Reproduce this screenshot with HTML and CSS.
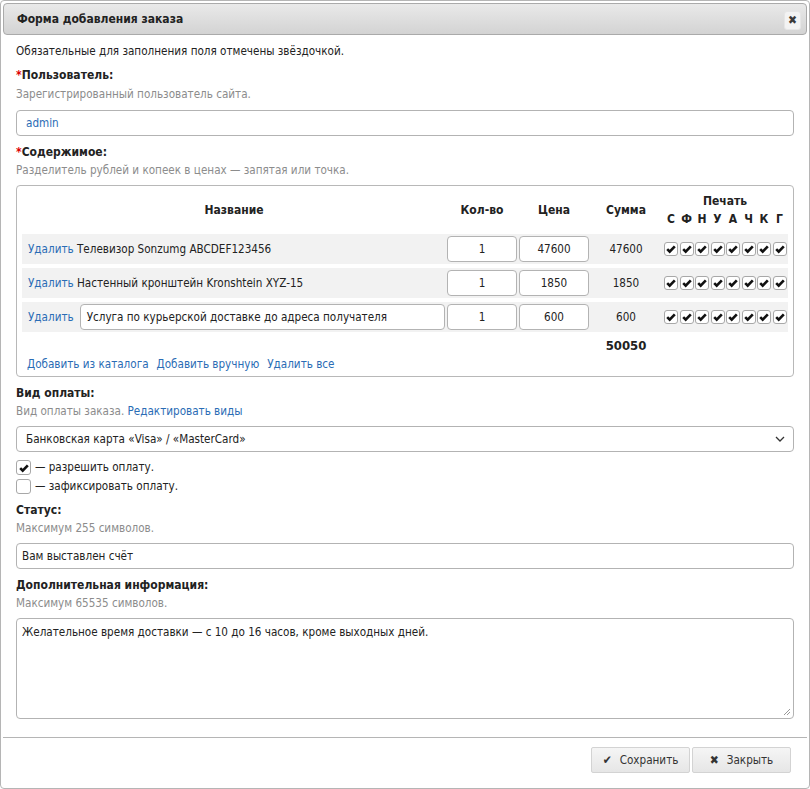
FILE: index.html
```html
<!DOCTYPE html>
<html lang="ru">
<head>
<meta charset="utf-8">
<title>Форма добавления заказа</title>
<link rel="stylesheet" href="styles.css">
</head>
<body>
<div class="dialog">
  <div class="titlebar">
    <span class="title">Форма добавления заказа</span>
    <span class="close">✖</span>
  </div>
  <div class="content">
    <p class="intro">Обязательные для заполнения поля отмечены звёздочкой.</p>

    <div class="label first"><span class="req">*</span>Пользователь:</div>
    <div class="hint first">Зарегистрированный пользователь сайта.</div>
    <div class="field user">admin</div>

    <div class="label"><span class="req">*</span>Содержимое:</div>
    <div class="hint">Разделитель рублей и копеек в ценах — запятая или точка.</div>
    <div class="itembox">
      <table class="items">
        <colgroup><col class="c-name"><col class="c-num"><col class="c-num"><col class="c-num"><col></colgroup>
        <thead>
          <tr>
            <th>Название</th>
            <th>Кол-во</th>
            <th>Цена</th>
            <th>Сумма</th>
            <th class="print-h">
              <div>Печать</div>
              <div class="boxes letters"><span>С</span><span>Ф</span><span>Н</span><span>У</span><span>А</span><span>Ч</span><span>К</span><span>Г</span></div>
            </th>
          </tr>
        </thead>
        <tbody>
          <tr class="row">
            <td class="name"><a>Удалить</a> Телевизор Sonzumg ABCDEF123456</td>
            <td><div class="num">1</div></td>
            <td><div class="num">47600</div></td>
            <td class="sum">47600</td>
            <td><div class="boxes"><i></i><i></i><i></i><i></i><i></i><i></i><i></i><i></i></div></td>
          </tr>
          <tr class="row">
            <td class="name"><a>Удалить</a> Настенный кронштейн Kronshtein XYZ-15</td>
            <td><div class="num">1</div></td>
            <td><div class="num">1850</div></td>
            <td class="sum">1850</td>
            <td><div class="boxes"><i></i><i></i><i></i><i></i><i></i><i></i><i></i><i></i></div></td>
          </tr>
          <tr class="row">
            <td class="name"><div class="nameline"><a>Удалить</a><div class="nameinput">Услуга по курьерской доставке до адреса получателя</div></div></td>
            <td><div class="num">1</div></td>
            <td><div class="num">600</div></td>
            <td class="sum">600</td>
            <td><div class="boxes"><i></i><i></i><i></i><i></i><i></i><i></i><i></i><i></i></div></td>
          </tr>
          <tr class="total">
            <td></td><td></td><td></td>
            <td class="sum"><b>50050</b></td>
            <td></td>
          </tr>
        </tbody>
      </table>
      <div class="links"><a>Добавить из каталога</a><a>Добавить вручную</a><a>Удалить все</a></div>
    </div>

    <div class="label">Вид оплаты:</div>
    <div class="hint">Вид оплаты заказа. <a>Редактировать виды</a></div>
    <div class="field select">
      <span>Банковская карта «Visa» / «MasterCard»</span>
      <svg class="chev" width="10" height="6" viewBox="0 0 10 6"><path d="M1 1l4 4 4-4" fill="none" stroke="#333" stroke-width="1.3"/></svg>
    </div>
    <div class="checks">
      <div class="check"><span class="cb on"></span>— разрешить оплату.</div>
      <div class="check"><span class="cb"></span>— зафиксировать оплату.</div>
    </div>

    <div class="label after-checks">Статус:</div>
    <div class="hint">Максимум 255 символов.</div>
    <div class="field status">Вам выставлен счёт</div>

    <div class="label">Дополнительная информация:</div>
    <div class="hint">Максимум 65535 символов.</div>
    <div class="field area">Желательное время доставки — с 10 до 16 часов, кроме выходных дней.
      <svg class="grip" width="8" height="8" viewBox="0 0 8 8"><path d="M7 1L1 7M7 4L4 7" stroke="#999" stroke-width="1"/></svg>
    </div>
  </div>
  <div class="footer">
    <span class="btn"><span class="ico">✔</span>Сохранить</span>
    <span class="btn"><span class="ico">✖</span>Закрыть</span>
  </div>
</div>
</body>
</html>
```

FILE: styles.css
```css
* { box-sizing: border-box; }
html, body { margin: 0; padding: 0; background: #fff; }
body {
  font-family: "DejaVu Sans Condensed", "DejaVu Sans", sans-serif;
  font-size: 11.6px;
  color: #222;
}
a { color: #2a6cb5; text-decoration: none; }

.dialog {
  width: 810px;
  height: 789px;
  border: 1px solid #b5b5b5;
  border-radius: 4px;
  padding: 2px;
  display: flex;
  flex-direction: column;
}
.titlebar {
  height: 32px;
  border: 1px solid #aaa;
  border-radius: 4px;
  background: linear-gradient(#e9e9e9, #d3d3d3);
  display: flex;
  align-items: center;
  justify-content: space-between;
  padding: 0 5px 0 13px;
  flex: none;
}
.title { font-weight: bold; color: #222; font-size: 12px; }
.close {
  width: 17px;
  height: 19px;
  margin-top: 2px;
  border: 1px solid #e6e6e6;
  border-radius: 3px;
  background: #f3f3f3;
  display: flex;
  align-items: center;
  justify-content: center;
  font-size: 12px;
  color: #3a3a3a;
}

.content {
  flex: 1;
  padding: 7px 13px 0 13px;
}
.intro { margin: 0; line-height: 18px; }
.label { font-weight: bold; line-height: 18px; margin-top: 7px; font-size: 12px; }
.label.first { margin-top: 6px; }
.label.after-checks { margin-top: 5px; }
.req { color: #d00; }
.hint { color: #8c8c8c; line-height: 18px; margin-bottom: 6px; }
.hint.first { margin-top: 1px; margin-bottom: 7px; }
.hint a { color: #2a6cb5; }

.field {
  height: 26px;
  border: 1px solid #b3b3b3;
  border-radius: 4px;
  padding: 0 9px;
  display: flex;
  align-items: center;
  background: #fff;
}
.field.user { color: #2a6cb5; }
.field.status { padding-left: 5px; }
.field.select { justify-content: space-between; padding-right: 8px; }
.field.area {
  height: 101px;
  align-items: flex-start;
  padding: 4px 5px 0 5px;
  line-height: 18px;
  position: relative;
}
.grip { position: absolute; right: 2px; bottom: 2px; }

.itembox {
  border: 1px solid #b8b8b8;
  border-radius: 4px;
  padding: 0 5px 3px 5px;
}
.items {
  width: 100%;
  table-layout: fixed;
  border-collapse: separate;
  border-spacing: 0 4px;
}
.c-name { width: 424px; }
.c-num { width: 72px; }
.items th {
  height: 40px;
  font-weight: bold;
  font-size: 12px;
  text-align: center;
  vertical-align: middle;
  padding: 0;
  line-height: 18px;
}
.items td { padding: 0; text-align: center; vertical-align: middle; }
.row td { background: #f2f2f2; height: 30px; }
.items td.name { text-align: left; padding-left: 6px; }
.nameline { display: flex; align-items: center; gap: 6px; }
.nameinput {
  flex: 1;
  height: 26px;
  border: 1px solid #b3b3b3;
  border-radius: 4px;
  background: #fff;
  display: flex;
  align-items: center;
  padding: 0 6px;
  margin-right: 1px;
}
.num {
  width: 70px;
  height: 26px;
  margin: 0 auto;
  border: 1px solid #b3b3b3;
  border-radius: 4px;
  background: #fff;
  display: flex;
  align-items: center;
  justify-content: center;
}
.total td { height: 20px; line-height: 20px; }
.total b { font-size: 13px; }

.boxes { display: flex; gap: 1.5px; padding-left: 2px; }
.boxes span { width: 14px; text-align: center; }
.boxes i {
  width: 14px;
  height: 14px;
  border: 1px solid #a8a8a8;
  border-radius: 3px;
  background: #fff url("data:image/svg+xml;utf8,<svg xmlns='http://www.w3.org/2000/svg' width='12' height='12' viewBox='0 0 12 12'><path d='M2.2 6.2l2.5 2.5 5.1-5.4' fill='none' stroke='%23111' stroke-width='2.6'/></svg>") center/12px no-repeat;
}

.links { line-height: 18px; margin-top: -5px; padding-left: 5px; display: flex; gap: 8px; }

.checks { margin-top: 6px; }
.check { display: flex; align-items: center; line-height: 19px; gap: 4px; }
.cb {
  width: 15px;
  height: 15px;
  border: 1px solid #a8a8a8;
  border-radius: 3px;
  background: #fff;
}
.cb.on {
  background: #fff url("data:image/svg+xml;utf8,<svg xmlns='http://www.w3.org/2000/svg' width='12' height='12' viewBox='0 0 12 12'><path d='M2.2 6.2l2.5 2.5 5.1-5.4' fill='none' stroke='%23111' stroke-width='2.6'/></svg>") center/12px no-repeat;
}

.footer {
  flex: none;
  border-top: 1px solid #b5b5b5;
  height: 49px;
  display: flex;
  justify-content: flex-end;
  align-items: flex-start;
  padding: 9px 16px 0 0;
  gap: 2px;
}
.btn {
  width: 99px;
  height: 26px;
  border: 1px solid #d3d3d3;
  border-radius: 2px;
  background: linear-gradient(#f5f5f5, #e6e6e6);
  display: flex;
  align-items: center;
  justify-content: center;
  gap: 8px;
  color: #333;
}
.ico { font-size: 12px; color: #333; }
```
